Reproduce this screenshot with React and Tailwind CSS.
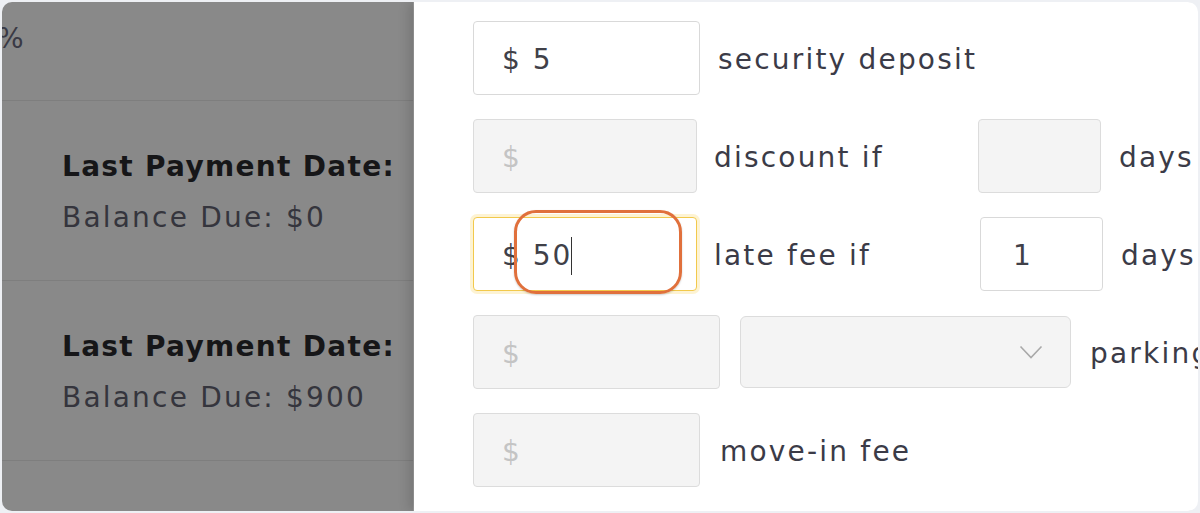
import React from 'react';

const font = { fontFamily: '"DejaVu Sans", "Liberation Sans", sans-serif' };

function Field({ width, value, placeholder, muted, focused, children }) {
    return (
        <div
            className={`relative h-[74px] shrink-0 rounded-[4px] border flex items-center pl-[28px] pt-[4px] text-[28px] tracking-[2px] ${
                muted ? 'bg-[#f4f4f4] border-[#dcdcdc]' : 'bg-white border-[#d9d9d9]'
            } ${focused ? 'border-[#f2c94c] shadow-[0_0_0_3px_rgba(250,222,130,0.35)]' : ''}`}
            style={{ width }}
        >
            {value ? <span className="text-[#404048]">{value}</span> : <span className="text-[#c4c4c4]">{placeholder}</span>}
            {children}
        </div>
    );
}

function Label({ children, className = '' }) {
    return <span className={`pt-[3px] text-[28px] tracking-[2.2px] text-[#3b3b47] whitespace-nowrap ${className}`}>{children}</span>;
}

export default function App() {
    return (
        <div className="w-[1200px] h-[513px] bg-[#eef0f4] p-[2px] overflow-hidden" style={font}>
            <div className="flex h-full rounded-[10px] overflow-hidden">
                {/* dimmed list behind the drawer */}
                <div className="w-[412px] shrink-0 bg-[#898989] flex flex-col border-r border-[#9c9c9c]">
                    <div className="h-[99px] shrink-0 border-b border-[#7e7e7e] pt-[16px]">
                        <span className="text-[28px] text-[#3a3a45] -ml-[5px]">%</span>
                    </div>
                    {['$0', '$900'].map((bal) => (
                        <div key={bal} className="h-[180px] shrink-0 border-b border-[#7e7e7e] pl-[60px] pt-[47px]">
                            <p className="text-[28px] font-bold tracking-[1.3px] text-[#161618] whitespace-nowrap leading-[38px]">Last Payment Date:</p>
                            <p className="text-[28px] tracking-[2.2px] text-[#35353d] whitespace-nowrap leading-[38px] mt-[13px]">Balance Due: {bal}</p>
                        </div>
                    ))}
                </div>

                {/* drawer form */}
                <div className="flex-1 bg-white relative z-10 shadow-[-6px_0_10px_rgba(0,0,0,0.12)] pl-[59px] pt-[19px] flex flex-col gap-[24px]">
                    <div className="flex items-center">
                        <Field width={227} value="$ 5" />
                        <Label className="ml-[18px]">security deposit</Label>
                    </div>

                    <div className="flex items-center">
                        <Field width={224} placeholder="$" muted />
                        <Label className="ml-[17px] w-[264px]">discount if</Label>
                        <Field width={123} muted />
                        <Label className="ml-[18px]">days</Label>
                    </div>

                    <div className="flex items-center">
                        <Field width={224} value="$ 50" focused>
                            <span className="w-[1px] h-[38px] bg-[#333] -ml-[1px]"></span>
                            <div className="absolute left-[40px] -top-[8px] w-[168px] h-[84px] rounded-[22px] border-[3px] border-[#e0703c] shadow-[0_1px_2px_rgba(0,0,0,0.2)]"></div>
                        </Field>
                        <Label className="ml-[17px] w-[266px]">late fee if</Label>
                        <div className="h-[74px] w-[123px] shrink-0 rounded-[4px] border border-[#d9d9d9] bg-white flex items-center pl-[32px] pt-[4px] text-[28px] text-[#404048]">1</div>
                        <Label className="ml-[18px]">days</Label>
                    </div>

                    <div className="flex items-center">
                        <Field width={247} placeholder="$" muted />
                        <div className="ml-[20px] w-[331px] h-[72px] shrink-0 rounded-[6px] border border-[#dcdcdc] bg-[#f4f4f4] flex items-center justify-end pr-[27px]">
                            <svg width="24" height="14" viewBox="0 0 24 14" fill="none" stroke="#a9a9a9" strokeWidth="1.6">
                                <path d="M1.5 1.5 L12 12.5 L22.5 1.5" />
                            </svg>
                        </div>
                        <Label className="ml-[19px]">parking</Label>
                    </div>

                    <div className="flex items-center">
                        <Field width={227} placeholder="$" muted />
                        <Label className="ml-[20px]">move-in fee</Label>
                    </div>
                </div>
            </div>
        </div>
    );
}
